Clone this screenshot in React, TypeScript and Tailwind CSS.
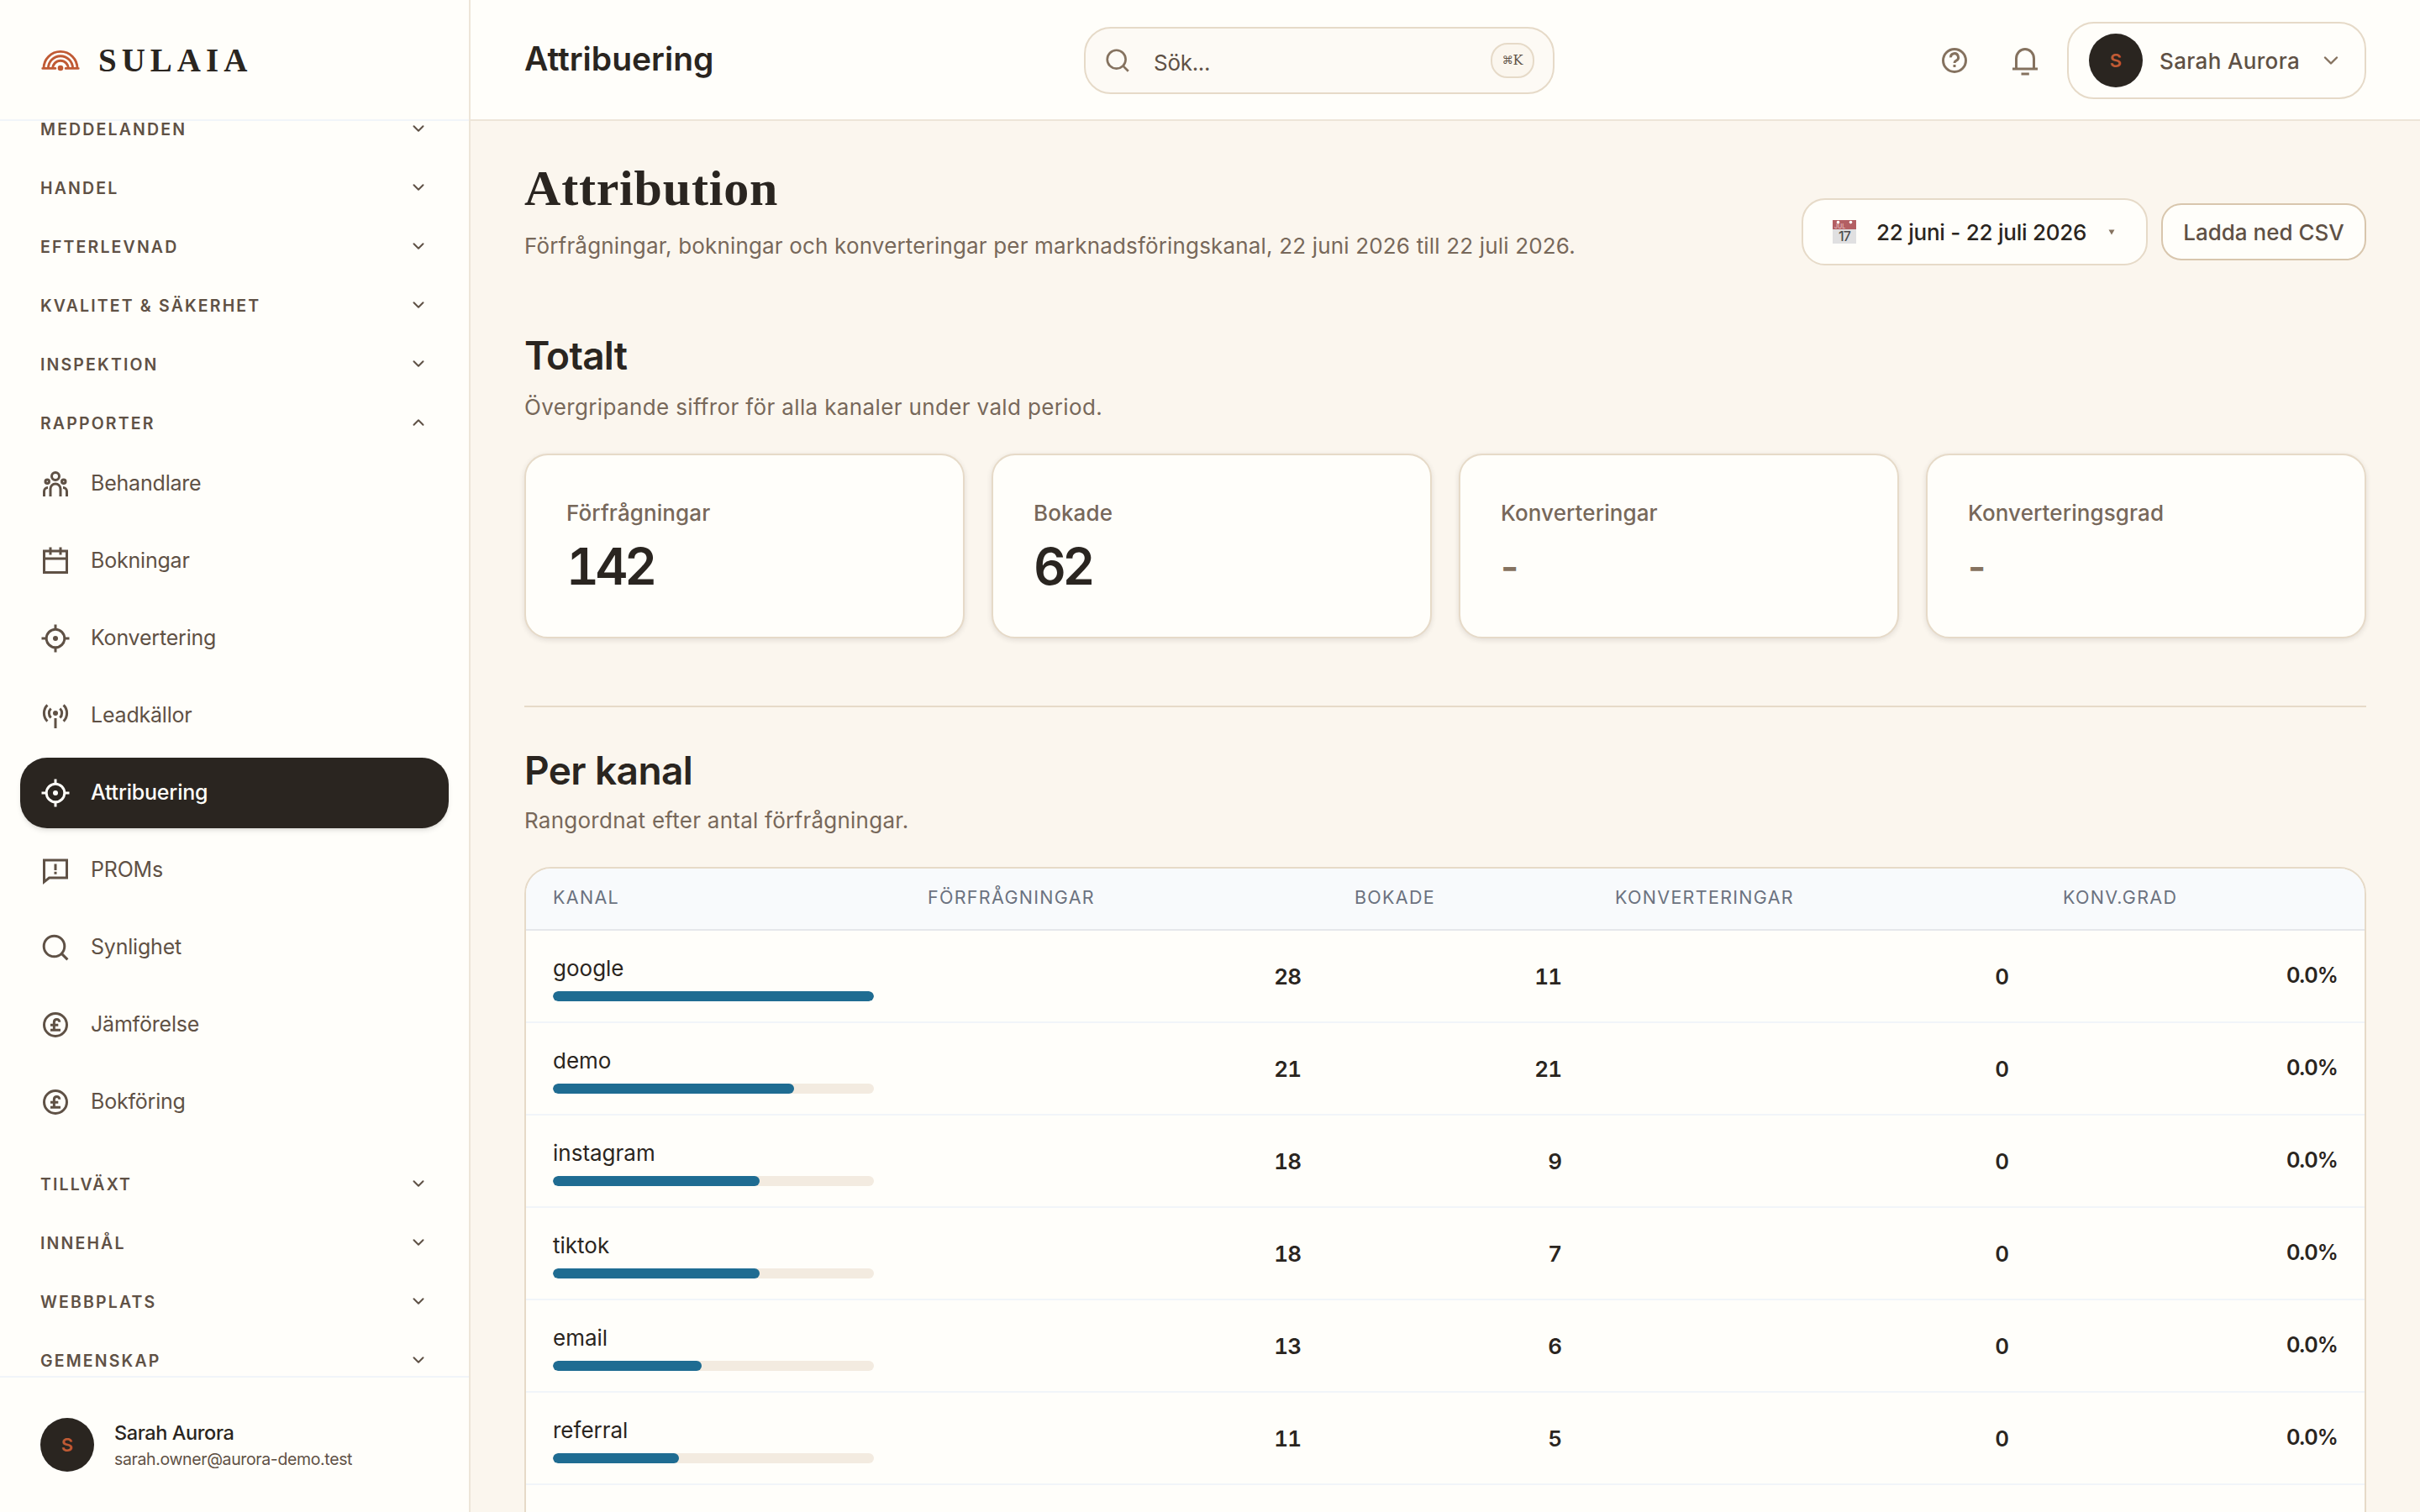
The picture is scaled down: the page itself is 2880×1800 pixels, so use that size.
import type { ReactNode } from "react";
import { ChevronDown, ChevronUp } from "lucide-react";
import clsx from "clsx";

type IconProps = {
  className?: string;
  children: ReactNode;
};

const Icon = ({ className = "size-9", children }: IconProps) => (
  <svg
    viewBox="0 0 24 24"
    fill="none"
    stroke="currentColor"
    strokeWidth="2"
    className={clsx("shrink-0", className)}
  >
    {children}
  </svg>
);

const UsersIcon = () => (
  <Icon>
    <circle cx="12" cy="6" r="3" />
    <circle cx="5.5" cy="10.2" r="1.5" />
    <circle cx="18.5" cy="10.2" r="1.5" />
    <path d="M8 22v-6a4 4 0 0 1 8 0v6M3 22v-4a3 3 0 0 1 3-3M21 22v-4a3 3 0 0 0-3-3" />
  </Icon>
);

const CalendarIcon = () => (
  <Icon>
    <path d="M3 4h18v17H3zM3 10h18M8 1v6M16 1v6" />
  </Icon>
);

const TargetIcon = () => (
  <Icon>
    <circle cx="12" cy="12" r="7.2" />
    <circle cx="12" cy="12" r="2" fill="currentColor" stroke="none" />
    <path d="M12 1v4M12 19v4M1 12h4M19 12h4" />
  </Icon>
);

const AntennaIcon = () => (
  <Icon>
    <circle cx="12" cy="10" r="2" fill="currentColor" stroke="none" />
    <path d="M12 14v8M8.4 6.3a5.3 5.3 0 0 0 0 7.4M15.6 6.3a5.3 5.3 0 0 1 0 7.4M5.6 3.6a9 9 0 0 0 0 12.8M18.4 3.6a9 9 0 0 1 0 12.8" />
  </Icon>
);

const MessageIcon = () => (
  <Icon>
    <path d="M3 4h18v14H7l-4 3.2zM12 7v5M12 13.2v2" />
  </Icon>
);

const SearchIcon = ({ className }: { className?: string }) => (
  <Icon className={className}>
    <circle cx="11" cy="11" r="8.2" />
    <path d="M16.6 16.6l5 5" />
  </Icon>
);

const PoundIcon = () => (
  <Icon>
    <circle cx="12" cy="12" r="9" />
    <path d="M15.2 9.8c0-1.3-.9-2.1-2.1-2.1s-2.2.8-2.2 2.3v6M8 12.2h6.2M8 16.2h8" />
  </Icon>
);

const HelpIcon = () => (
  <Icon>
    <circle cx="12" cy="12" r="9" />
    <path d="M9 9.6a3 3 0 1 1 4.4 2.5c-.9.5-1.4.9-1.4 1.9M12 15.4v2" />
  </Icon>
);

const BellIcon = () => (
  <Icon>
    <path d="M5 18v-7.5a7 7.5 0 0 1 14 0V18M2 18.6h20M9 22.6h6.2" />
  </Icon>
);

const Logo = () => (
  <svg
    viewBox="0 0 46 26"
    fill="none"
    stroke="#c05a34"
    strokeWidth="2.9"
    strokeLinecap="round"
    className="h-[26px] w-[46px]"
  >
    <path d="M3 22.4a20 20 0 0 1 40 0M8.4 22.4a14.6 14.6 0 0 1 29.2 0M13.8 22.4a9.2 9.2 0 0 1 18.4 0M1.8 22.4h15M29.2 22.4h15" />
    <circle cx="23" cy="22" r="3.3" fill="#c05a34" stroke="none" />
  </svg>
);

const topSections = [
  "Meddelanden",
  "Handel",
  "Efterlevnad",
  "Kvalitet & säkerhet",
  "Inspektion",
];

const bottomSections = ["Tillväxt", "Innehål", "Webbplats", "Gemenskap"];

const reports = [
  { label: "Behandlare", icon: <UsersIcon /> },
  { label: "Bokningar", icon: <CalendarIcon /> },
  { label: "Konvertering", icon: <TargetIcon /> },
  { label: "Leadkällor", icon: <AntennaIcon /> },
  { label: "Attribuering", icon: <TargetIcon />, active: true },
  { label: "PROMs", icon: <MessageIcon /> },
  { label: "Synlighet", icon: <SearchIcon /> },
  { label: "Jämförelse", icon: <PoundIcon /> },
  { label: "Bokföring", icon: <PoundIcon /> },
];

const stats = [
  { label: "Förfrågningar", value: "142" },
  { label: "Bokade", value: "62" },
  { label: "Konverteringar", value: null },
  { label: "Konverteringsgrad", value: null },
];

const channels = [
  { name: "google", leads: 28, booked: 11 },
  { name: "demo", leads: 21, booked: 21 },
  { name: "instagram", leads: 18, booked: 9 },
  { name: "tiktok", leads: 18, booked: 7 },
  { name: "email", leads: 13, booked: 6 },
  { name: "referral", leads: 11, booked: 5 },
];

const maxLeads = 28;

const SectionHeader = ({ label, open }: { label: string; open?: boolean }) => {
  const Chevron = open ? ChevronUp : ChevronDown;
  return (
    <button className="flex h-[62px] w-full shrink-0 items-center justify-between pt-[2px] pr-[49px] pl-12 text-[19.5px] leading-4 font-semibold tracking-[2.15px] text-[#5f5145] uppercase">
      {label}
      <Chevron className="mb-[3px] size-[22px]" strokeWidth={2.2} />
    </button>
  );
};

const Avatar = () => (
  <span className="flex size-16 shrink-0 items-center justify-center rounded-full bg-[#2a2520] text-[22px] font-semibold text-[#c05a34]">
    S
  </span>
);

const Sidebar = () => (
  <aside className="flex h-full w-[560px] shrink-0 flex-col border-r-2 border-[#ede5d8] bg-[#fffefa]">
    <div className="flex h-36 shrink-0 items-center gap-[22px] border-b-2 border-[#f1f5f9] pt-[2px] pl-[49px]">
      <Logo />
      <span className="font-['Liberation_Serif',serif] text-[39px] font-bold tracking-[6px] text-[#2a2520]">
        SULAIA
      </span>
    </div>
    <nav className="min-h-0 flex-1 overflow-hidden">
      <div className="-mt-[22px] flex flex-col gap-2">
        {topSections.map((label) => (
          <SectionHeader key={label} label={label} />
        ))}
        <div>
          <SectionHeader label="Rapporter" open />
          <ul className="mb-4 flex flex-col gap-2 px-6">
            {reports.map(({ label, icon, active }) => (
              <li
                key={label}
                className={clsx(
                  "flex h-[84px] items-center gap-6 rounded-[32px] pl-6 text-[25px]",
                  active
                    ? "bg-[#2a2520] font-medium tracking-[-0.2px] text-[#fffefa] shadow-md"
                    : "tracking-[-0.2px] text-[#5f5145]"
                )}
              >
                {icon}
                {label}
              </li>
            ))}
          </ul>
        </div>
        {bottomSections.map((label) => (
          <SectionHeader key={label} label={label} />
        ))}
      </div>
    </nav>
    <div className="flex h-[162px] shrink-0 items-center gap-6 border-t-2 border-[#f1f5f9] pl-12">
      <Avatar />
      <div className="flex flex-col pt-[2px]">
        <span className="text-[23.5px] leading-8 font-medium tracking-[-0.4px] text-[#2a2520]">
          Sarah Aurora
        </span>
        <span className="text-[19.5px] leading-[30px] tracking-[-0.37px] text-[#5f5145]">
          sarah.owner@aurora-demo.test
        </span>
      </div>
    </div>
  </aside>
);

const Topbar = () => (
  <header className="flex h-36 shrink-0 items-center border-b-2 border-[#ede5d8] bg-[#fffefa] px-16 pt-[2px]">
    <h2 className="w-[666px] pb-[4px] text-[39px] font-semibold text-[#2a2520]">
      Attribuering
    </h2>
    <div className="flex h-20 w-[560px] items-center rounded-[32px] border-2 border-[#e6dac8] bg-[#fdfaf5] pr-[22px] pl-[22px] text-[#85725f]">
      <SearchIcon className="size-8" />
      <span className="ml-[27px] flex-1 pt-1 text-[26px] tracking-[-0.3px] text-[#5f5145]">
        Sök...
      </span>
      <kbd className="flex h-[42px] w-[52px] items-center justify-center rounded-[20px] border-2 border-[#e6dac8] bg-[#fbf6ee] text-[#5f5145]">
        <span className="font-['DejaVu_Sans',sans-serif] text-[13px]">⌘</span>
        <span className="font-['DejaVu_Serif',serif] text-[16px]">K</span>
      </kbd>
    </div>
    <div className="flex flex-1 items-center justify-end text-[#85725f]">
      <HelpIcon />
      <span className="ml-12 flex">
        <BellIcon />
      </span>
      <div className="ml-8 flex h-[92px] w-[356px] items-center rounded-[32px] border-2 border-[#e6dac8] pl-6">
        <Avatar />
        <span className="ml-5 w-[184px] pt-[1px] text-[26px] font-medium tracking-[0.35px] whitespace-nowrap text-[#5f5145]">
          Sarah Aurora
        </span>
        <ChevronDown className="ml-[6px] size-7" strokeWidth={2.1} />
      </div>
    </div>
  </header>
);

// Tear-off calendar with the day printed on the page
const TearOffCalendar = () => (
  <svg viewBox="0 0 28 28" className="size-7 opacity-80">
    <rect width="28" height="28" fill="#d9d9dc" />
    <rect width="28" height="11" fill="#a1383e" />
    <text x="2" y="9.6" fontSize="7" fill="#e0aeb0" fontFamily="Inter">
      JUL
    </text>
    <circle cx="6.5" cy="2.6" r="1.8" fill="#fff" />
    <circle cx="21.5" cy="2.6" r="1.8" fill="#fff" />
    <text
      x="14"
      y="25"
      fontSize="16"
      textAnchor="middle"
      fill="#222"
      fontFamily="Inter"
      letterSpacing="-1"
    >
      17
    </text>
  </svg>
);

const StatCard = ({ label, value }: { label: string; value: string | null }) => (
  <div className="h-[220px] rounded-[28px] border-2 border-[#e6dac8] bg-[#fffefa] px-12 pt-[49px] shadow-[0_2px_6px_rgba(42,37,32,0.12)]">
    <p className="text-[26px] leading-10 font-medium tracking-[0.1px] text-[#77685a]">
      {label}
    </p>
    {value ? (
      <p className="mt-[21px] text-[60px] leading-[44px] font-semibold tracking-[-4.2px] text-[#2a2520] tabular-nums">
        {value}
      </p>
    ) : (
      <p className="mt-[21px] text-[46px] leading-[44px] font-semibold text-[#85725f]">
        -
      </p>
    )}
  </div>
);

const columns = "grid grid-cols-[446px_508px_310px_533px_1fr]";

const ChannelTable = () => (
  <div className="h-[900px] overflow-hidden rounded-[32px] border-2 border-[#e6dac8] bg-[#fffefa]">
    <div
      className={clsx(
        columns,
        "h-[74px] items-center border-b-2 border-[#e5e7eb] bg-[#f8fafc] pb-[3px] text-[21.5px] tracking-[1.3px] text-[#6b7280] uppercase"
      )}
    >
      <span className="pl-8">Kanal</span>
      <span className="pl-8">Förfrågningar</span>
      <span className="pl-8">Bokade</span>
      <span className="pl-8">Konverteringar</span>
      <span className="pl-8">Konv.grad</span>
    </div>
    {channels.map(({ name, leads, booked }) => (
      <div
        key={name}
        className={clsx(
          columns,
          "h-[110px] items-center border-b-2 border-[#f1f5f9] text-right text-[26px] font-semibold text-[#2a2520] tabular-nums"
        )}
      >
        <div className="px-8 pt-[4px] text-left">
          <p className="-mt-px text-[26px] leading-9 font-normal">{name}</p>
          <div className="mt-[9px] h-3 overflow-hidden rounded-md bg-[#f3ebe0]">
            <div
              className="h-full rounded-md bg-[#1f6c92]"
              style={{ width: `${(leads / maxLeads) * 100}%` }}
            />
          </div>
        </div>
        <span className="pr-8 tracking-[-1px]">{leads}</span>
        <span className="pr-8 tracking-[-1px]">{booked}</span>
        <span className="pr-8">0</span>
        <span className="pr-8 text-[25px] tracking-[-0.9px] proportional-nums">
          0.0%
        </span>
      </div>
    ))}
  </div>
);

const App = () => {
  return (
    <div className="flex h-[1800px] w-[2880px] overflow-hidden bg-[#fbf6ee] font-['Inter','Liberation_Sans',sans-serif]">
      <Sidebar />
      <div className="flex min-w-0 flex-1 flex-col">
        <Topbar />
        <main className="min-h-0 flex-1 overflow-hidden px-16">
          <div className="flex h-[172px] justify-between">
            <div className="pt-[44px]">
              <h1 className="font-['Liberation_Serif',serif] text-[60px] leading-[72px] font-bold tracking-[0.8px] text-[#2a2520]">
                Attribution
              </h1>
              <p className="mt-[13px] text-[26px] leading-10 tracking-[0.17px] text-[#77685a]">
                Förfrågningar, bokningar och konverteringar per
                marknadsföringskanal, 22 juni 2026 till 22 juli 2026.
              </p>
            </div>
            <div className="flex items-center gap-4 self-end">
              <button className="flex h-20 w-[412px] items-center rounded-[28px] border-2 border-[#e6dac8] bg-[#fffefa] pl-[35px] text-[26px] font-medium text-[#2a2520]">
                <TearOffCalendar />
                <span className="ml-6 w-[252px] text-left tracking-[-0.25px] whitespace-nowrap">
                  22 juni - 22 juli 2026
                </span>
                <svg viewBox="0 0 8 8" className="ml-6 size-2 fill-[#85725f]">
                  <path d="M0.5 1.5h7L4 7.5z" />
                </svg>
              </button>
              <button className="flex h-[68px] w-[244px] items-center justify-center rounded-[24px] border-2 border-[#d8c6ad] bg-[#fffefa] text-[26px] font-medium whitespace-nowrap text-[#5f5145]">
                Ladda ned CSV
              </button>
            </div>
          </div>

          <section className="pt-[75px]">
            <h3 className="text-[46px] leading-[64px] font-semibold tracking-[-0.7px] text-[#2a2520]">
              Totalt
            </h3>
            <p className="mt-[10px] text-[26px] leading-10 tracking-[0.36px] text-[#77685a]">
              Övergripande siffror för alla kanaler under vald period.
            </p>
            <div className="mt-[35px] grid grid-cols-4 gap-8">
              {stats.map(({ label, value }) => (
                <StatCard key={label} label={label} value={value} />
              ))}
            </div>
          </section>

          <section className="mt-20 border-t-2 border-[#e6dac8] pt-[43px]">
            <h3 className="text-[46px] leading-[64px] font-semibold tracking-[-0.6px] text-[#2a2520]">
              Per kanal
            </h3>
            <p className="mt-[8px] mb-[35px] text-[26px] leading-10 tracking-[0.25px] text-[#77685a]">
              Rangordnat efter antal förfrågningar.
            </p>
            <ChannelTable />
          </section>
        </main>
      </div>
    </div>
  );
};

export default App;
